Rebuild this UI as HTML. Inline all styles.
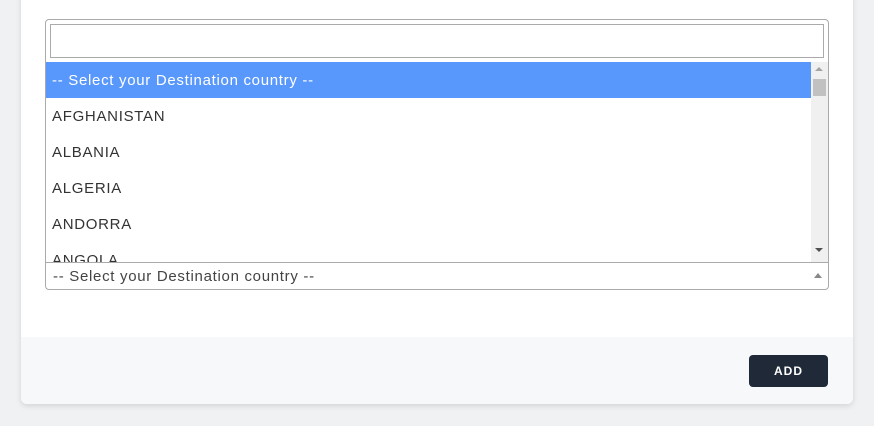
<!DOCTYPE html>
<html><head><style>
body{margin:0;width:874px;height:426px;background:#f0f1f3;font-family:"Liberation Sans",sans-serif;position:relative;overflow:hidden}
.card{position:absolute;left:21px;top:-10px;width:832px;height:414px;background:#fff;border-radius:6px;box-shadow:0 2px 6px rgba(0,0,0,.12);overflow:hidden}
.foot{position:absolute;left:0;right:0;top:347px;bottom:0;background:#f7f8fa}
.btn{position:absolute;left:728px;top:365px;width:79px;height:32px;background:#1f2937;border-radius:4px;color:#fff;font-size:12px;font-weight:bold;letter-spacing:1px;text-align:center;line-height:32px}
.dd{position:absolute;left:45px;top:19px;width:782px;height:269px;border:1px solid #aaa;border-radius:4px;background:#fff;overflow:hidden}
.search{position:absolute;left:4px;top:4px;width:772px;height:32px;border:1px solid #aaa}
.list{position:absolute;left:0;top:42px;width:765px;height:200px;overflow:hidden}
.row{height:36px;line-height:38px;padding-left:6px;font-size:15px;color:#333;letter-spacing:0.7px}
.hl{background:#5897fb;color:#fff}
.sb{position:absolute;left:765px;top:42px;width:17px;height:200px;background:#f0f0f0}
.thumb{position:absolute;left:2px;top:17px;width:13px;height:17px;background:#c1c1c1}
.sel{position:absolute;left:0;top:242px;width:782px;height:27px;border-top:1px solid #aaa;font-size:15px;letter-spacing:0.7px;color:#444;line-height:28px;padding-left:7px;box-sizing:border-box}
.tri{position:absolute;width:0;height:0;border-left:4px solid transparent;border-right:4px solid transparent}
</style></head><body>
<div class="card"><div class="foot"></div><div class="btn">ADD</div></div>
<div class="dd">
<div class="search"></div>
<div class="list">
<div class="row hl">-- Select your Destination country --</div>
<div class="row">AFGHANISTAN</div>
<div class="row">ALBANIA</div>
<div class="row">ALGERIA</div>
<div class="row">ANDORRA</div>
<div class="row">ANGOLA</div>
</div>
<div class="sb"><div class="tri" style="left:4px;top:5px;border-bottom:4px solid #a3a3a3"></div><div class="thumb"></div><div class="tri" style="left:4px;top:186px;border-top:4px solid #505050"></div></div>
<div class="sel">-- Select your Destination country --<div class="tri" style="left:768px;top:10px;border-bottom:5px solid #888"></div></div>
</div>
</body></html>
